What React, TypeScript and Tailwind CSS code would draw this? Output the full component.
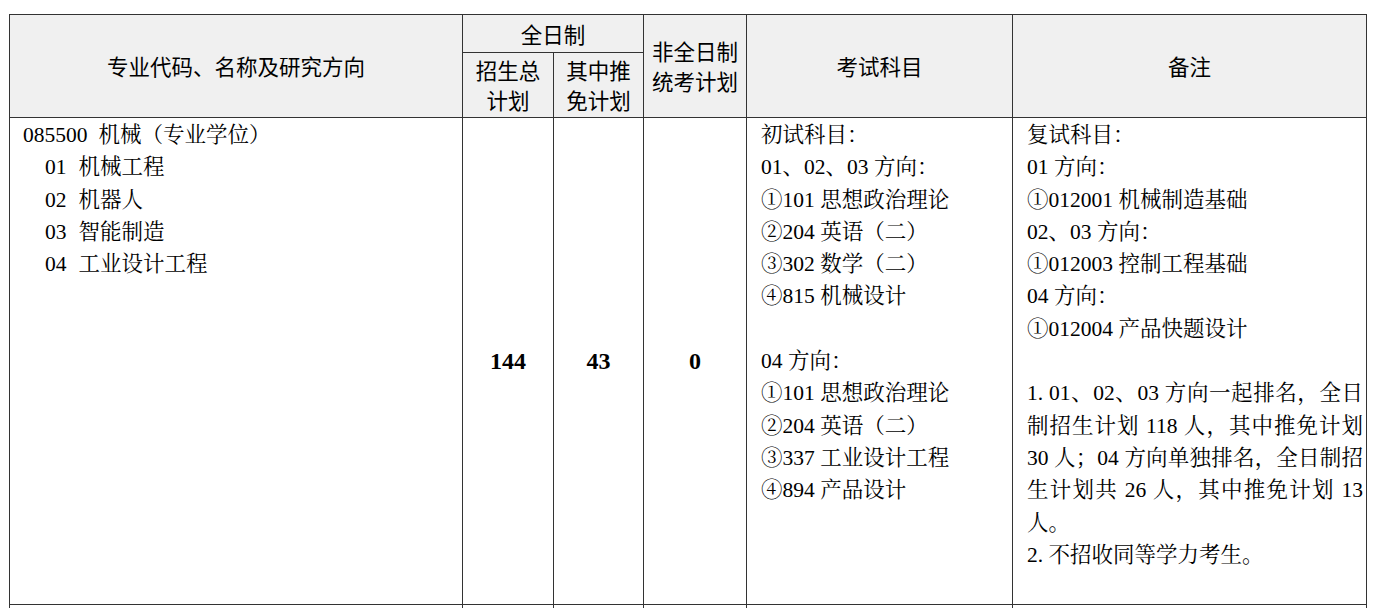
import React from "react";

const serif = {
  fontFamily: '"Liberation Serif", "Noto Serif CJK SC", "Noto Sans CJK SC", serif',
};

const Line = ({ children, justify = false, indent = false }: { children: React.ReactNode; justify?: boolean; indent?: boolean }) => (
  <div
    className={
      "h-[32.3px] leading-[32.3px] whitespace-nowrap " +
      (justify ? "text-justify [text-align-last:justify] " : "") +
      (indent ? "pl-[22px]" : "")
    }
  >
    {children}
  </div>
);

export default function App() {
  const th =
    "border border-[#333] bg-[#f0f0f0] text-center align-middle font-normal text-[21.5px] text-black";
  const td = "border border-[#333] text-black align-top";
  return (
    <div className="w-[1378px] h-[608px] overflow-hidden bg-white pl-[9px] pt-[14px]">
      <table
        className="table-fixed border-collapse w-[1357px]"
        style={{ fontFamily: '"Noto Sans CJK SC", sans-serif' }}
      >
        <colgroup>
          <col className="w-[453px]" />
          <col className="w-[91px]" />
          <col className="w-[90px]" />
          <col className="w-[103px]" />
          <col className="w-[266px]" />
          <col className="w-[354px]" />
        </colgroup>
        <thead>
          <tr className="h-[38px]">
            <th rowSpan={2} className={th}>
              专业代码、名称及研究方向
            </th>
            <th colSpan={2} className={th + " leading-[30px]"}>
              全日制
            </th>
            <th rowSpan={2} className={th + " leading-[30px]"}>
              非全日制
              <br />
              统考计划
            </th>
            <th rowSpan={2} className={th}>
              考试科目
            </th>
            <th rowSpan={2} className={th}>
              备注
            </th>
          </tr>
          <tr className="h-[65px]">
            <th className={th + " leading-[30px]"}>
              招生总
              <br />
              计划
            </th>
            <th className={th + " leading-[30px]"}>
              其中推
              <br />
              免计划
            </th>
          </tr>
        </thead>
        <tbody style={serif} className="text-[21.5px]">
          <tr className="h-[487px]">
            <td className={td + " pl-[13px] pt-[1px]"}>
              <Line>
                085500<span className="inline-block w-[11px]" />机械（专业学位）
              </Line>
              <Line indent>
                01<span className="inline-block w-[12px]" />机械工程
              </Line>
              <Line indent>
                02<span className="inline-block w-[12px]" />机器人
              </Line>
              <Line indent>
                03<span className="inline-block w-[12px]" />智能制造
              </Line>
              <Line indent>
                04<span className="inline-block w-[12px]" />工业设计工程
              </Line>
            </td>
            <td className="border border-[#333] text-center align-middle font-bold text-[24px] text-black">
              144
            </td>
            <td className="border border-[#333] text-center align-middle font-bold text-[24px] text-black">
              43
            </td>
            <td className="border border-[#333] text-center align-middle font-bold text-[24px] text-black">
              0
            </td>
            <td className={td + " pl-[14px] pt-[1px]"}>
              <Line>初试科目：</Line>
              <Line>01、02、03 方向：</Line>
              <Line>①101 思想政治理论</Line>
              <Line>②204 英语（二）</Line>
              <Line>③302 数学（二）</Line>
              <Line>④815 机械设计</Line>
              <Line>{"\u00a0"}</Line>
              <Line>04 方向：</Line>
              <Line>①101 思想政治理论</Line>
              <Line>②204 英语（二）</Line>
              <Line>③337 工业设计工程</Line>
              <Line>④894 产品设计</Line>
            </td>
            <td className={td + " pl-[14px] pr-[3px] pt-[1px]"}>
              <Line>复试科目：</Line>
              <Line>01 方向：</Line>
              <Line>①012001 机械制造基础</Line>
              <Line>02、03 方向：</Line>
              <Line>①012003 控制工程基础</Line>
              <Line>04 方向：</Line>
              <Line>①012004 产品快题设计</Line>
              <Line>{"\u00a0"}</Line>
              <Line justify>1. 01、02、03 方向一起排名，全日</Line>
              <Line justify>制招生计划 118 人，其中推免计划</Line>
              <Line justify>30 人；04 方向单独排名，全日制招</Line>
              <Line justify>生计划共 26 人，其中推免计划 13</Line>
              <Line>人。</Line>
              <Line>2. 不招收同等学力考生。</Line>
            </td>
          </tr>
          <tr className="h-[40px]">
            <td className={td}></td>
            <td className={td}></td>
            <td className={td}></td>
            <td className={td}></td>
            <td className={td}></td>
            <td className={td}></td>
          </tr>
        </tbody>
      </table>
    </div>
  );
}
